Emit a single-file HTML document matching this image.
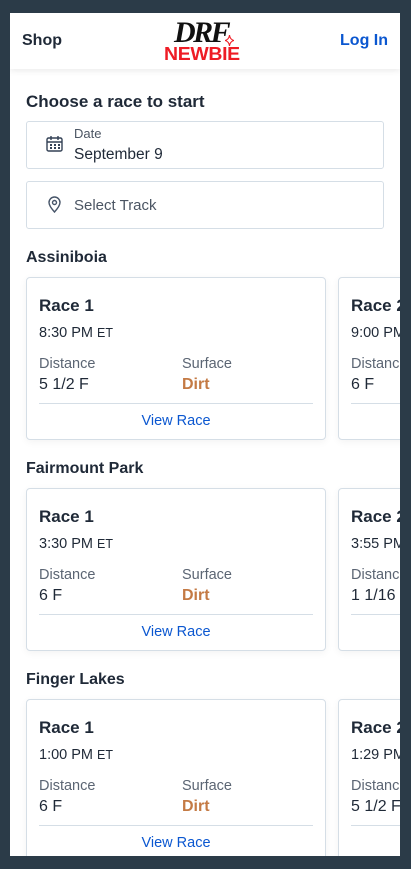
<!DOCTYPE html>
<html><head><style>
*{margin:0;padding:0;box-sizing:border-box}
body{width:411px;height:869px;background:#2b3b48;font-family:"Liberation Sans",sans-serif;overflow:hidden;position:relative}
.page{position:absolute;left:10px;top:13px;width:390px;height:843px;background:#fff;overflow:hidden}
.hdr{position:absolute;left:0;top:0;width:390px;height:56px;background:#fff;box-shadow:0 2px 6px rgba(0,0,0,.08)}
.shop{position:absolute;left:12px;top:19px;font-size:16px;font-weight:bold;color:#1f2937}
.login{position:absolute;right:12px;top:19px;font-size:16px;font-weight:bold;color:#0b57d0}
.drf{position:absolute;left:164px;top:5px;font-family:"Liberation Serif",serif;font-style:italic;font-weight:bold;font-size:30px;letter-spacing:-2.5px;color:#111;line-height:30px}
.newbie{position:absolute;left:154px;top:32px;font-weight:900;font-size:18px;color:#ee1c25;line-height:18px;transform:scaleX(1.08);transform-origin:left;letter-spacing:-.3px}
.h1{position:absolute;left:16px;top:79px;font-size:17px;font-weight:bold;color:#1f2937}
.field{position:absolute;left:16px;width:358px;height:48px;border:1px solid #d5dee6;border-radius:3px}
.lbl{position:absolute;left:47px;font-size:13px;color:#4b5563}
.val{position:absolute;left:47px;font-size:15.5px;color:#1f2937}
.track{position:absolute;left:16px;font-size:16px;font-weight:bold;color:#1f2937}
.card{position:absolute;width:300px;height:163px;border:1px solid #d5dee6;border-radius:4px;background:#fff;box-shadow:0 2px 8px rgba(0,0,0,.05)}
.card .r{position:absolute;left:12px;top:18px;font-size:17px;font-weight:bold;color:#1f2937}
.card .t{position:absolute;left:12px;top:47px;font-size:14.5px;color:#1f2937}
.card .t small{font-size:12.5px}
.card .dl{position:absolute;left:12px;top:78px;font-size:14.5px;color:#5b6573}
.card .dv{position:absolute;left:12px;top:98px;font-size:16px;color:#1f2937}
.card .sl{position:absolute;left:155px;top:78px;font-size:14.5px;color:#5b6573}
.card .sv{position:absolute;left:155px;top:98px;font-size:16px;font-weight:bold;color:#c47a44}
.card .hr{position:absolute;left:12px;right:12px;top:125px;border-top:1px solid #d5dee6}
.card .vr{position:absolute;left:0;right:0;top:135px;text-align:center;font-size:14.5px;color:#0b57d0}
</style></head><body>
<div class="page">
<div class="hdr">
<div class="shop">Shop</div>
<div class="drf">DRF</div>
<svg style="position:absolute;left:215px;top:22px" width="9" height="11" viewBox="0 0 10 12"><path d="M5 0 Q5.6 5 10 6 Q5.6 7 5 12 Q4.4 7 0 6 Q4.4 5 5 0Z" fill="none" stroke="#ee1c25" stroke-width="1.2"/></svg>
<div class="newbie">NEWBIE</div>
<div class="login">Log In</div>
</div>
<div class="h1">Choose a race to start</div>
<div class="field" style="top:108px">
<svg style="position:absolute;left:19px;top:13px" width="17" height="17" viewBox="0 0 17 17" fill="none" stroke="#334155" stroke-width="1.4"><rect x="1" y="3" width="15" height="13" rx="1.5"/><path d="M1 7h15M5 1v4M12 1v4"/><g fill="#334155" stroke="none"><rect x="4" y="9" width="2" height="2"/><rect x="8" y="9" width="2" height="2"/><rect x="12" y="9" width="2" height="2"/><rect x="4" y="12" width="2" height="2"/><rect x="8" y="12" width="2" height="2"/><rect x="12" y="12" width="2" height="2"/></g></svg>
<div class="lbl" style="top:4px">Date</div>
<div class="val" style="top:24px">September 9</div>
</div>
<div class="field" style="top:168px">
<svg style="position:absolute;left:21px;top:14px" width="13" height="17" viewBox="0 0 13 17" fill="none" stroke="#475569" stroke-width="1.4"><path d="M6.5 16 C2 11 1 8.5 1 6.5 A5.5 5.5 0 0 1 12 6.5 C12 8.5 11 11 6.5 16Z"/><circle cx="6.5" cy="6.5" r="2"/></svg>
<div class="val" style="top:15px;font-size:15px;color:#4b5563">Select Track</div>
</div>

<div class="track" style="top:236px">Assiniboia</div>
<div class="card" style="left:16px;top:264px"><div class="r">Race 1</div><div class="t">8:30 PM <small>ET</small></div><div class="dl">Distance</div><div class="dv">5 1/2 F</div><div class="sl">Surface</div><div class="sv">Dirt</div><div class="hr"></div><div class="vr">View Race</div></div>
<div class="card" style="left:328px;top:264px"><div class="r">Race 2</div><div class="t">9:00 PM <small>ET</small></div><div class="dl">Distance</div><div class="dv">6 F</div><div class="hr"></div></div>

<div class="track" style="top:447px">Fairmount Park</div>
<div class="card" style="left:16px;top:475px"><div class="r">Race 1</div><div class="t">3:30 PM <small>ET</small></div><div class="dl">Distance</div><div class="dv">6 F</div><div class="sl">Surface</div><div class="sv">Dirt</div><div class="hr"></div><div class="vr">View Race</div></div>
<div class="card" style="left:328px;top:475px"><div class="r">Race 2</div><div class="t">3:55 PM <small>ET</small></div><div class="dl">Distance</div><div class="dv">1 1/16 M</div><div class="hr"></div></div>

<div class="track" style="top:658px">Finger Lakes</div>
<div class="card" style="left:16px;top:686px"><div class="r">Race 1</div><div class="t">1:00 PM <small>ET</small></div><div class="dl">Distance</div><div class="dv">6 F</div><div class="sl">Surface</div><div class="sv">Dirt</div><div class="hr"></div><div class="vr">View Race</div></div>
<div class="card" style="left:328px;top:686px"><div class="r">Race 2</div><div class="t">1:29 PM <small>ET</small></div><div class="dl">Distance</div><div class="dv">5 1/2 F</div><div class="hr"></div></div>
</div>
</body></html>
